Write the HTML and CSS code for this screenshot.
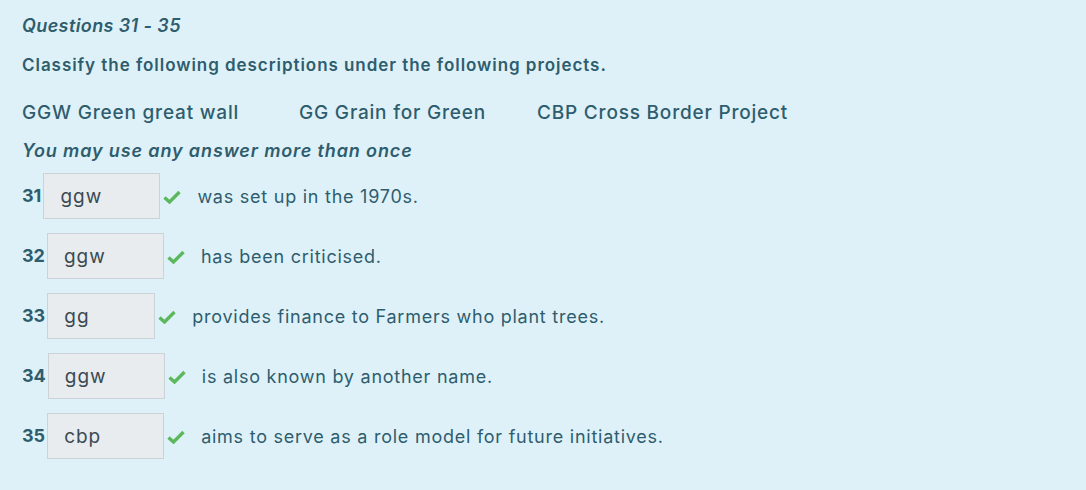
FILE: index.html
```html
<!DOCTYPE html>
<html lang="en">
<head>
<meta charset="utf-8">
<title>Questions 31 - 35</title>
<link rel="stylesheet" href="styles.css">
</head>
<body>
<main class="panel">
  <h2 class="q-title">Questions 31 - 35</h2>
  <p class="instr">Classify the following descriptions under the following projects.</p>
  <div class="projects">
    <span class="proj">GGW Green great wall</span>
    <span class="proj">GG Grain for Green</span>
    <span class="proj">CBP Cross Border Project</span>
  </div>
  <p class="note">You may use any answer more than once</p>
  <ol class="items">
    <li class="item"><span class="num">31</span><span class="box">ggw</span><svg class="tick" viewBox="0 0 18 14"><path d="M1.5 7.5 L6.5 12 L16.5 2" /></svg><span class="desc">was set up in the 1970s.</span></li>
    <li class="item"><span class="num">32</span><span class="box">ggw</span><svg class="tick" viewBox="0 0 18 14"><path d="M1.5 7.5 L6.5 12 L16.5 2" /></svg><span class="desc">has been criticised.</span></li>
    <li class="item"><span class="num">33</span><span class="box box-sm">gg</span><svg class="tick" viewBox="0 0 18 14"><path d="M1.5 7.5 L6.5 12 L16.5 2" /></svg><span class="desc">provides finance to Farmers who plant trees.</span></li>
    <li class="item"><span class="num">34</span><span class="box">ggw</span><svg class="tick" viewBox="0 0 18 14"><path d="M1.5 7.5 L6.5 12 L16.5 2" /></svg><span class="desc">is also known by another name.</span></li>
    <li class="item"><span class="num">35</span><span class="box">cbp</span><svg class="tick" viewBox="0 0 18 14"><path d="M1.5 7.5 L6.5 12 L16.5 2" /></svg><span class="desc">aims to serve as a role model for future initiatives.</span></li>
  </ol>
</main>
</body>
</html>
```
FILE: styles.css
```css
html, body {
  margin: 0;
  padding: 0;
  background: #dff1f8;
}
body {
  font-family: Inter, "Open Sans", "Liberation Sans", sans-serif;
  color: #2e5d6e;
}
.panel {
  padding: 13px 22px 20px 22px;
}
.q-title {
  margin: 0;
  font-size: 18px;
  font-style: italic;
  font-weight: 600;
  line-height: 26px;
  letter-spacing: 0.4px;
}
.instr {
  margin: 13px 0 0;
  font-size: 17px;
  font-weight: 600;
  line-height: 26px;
  letter-spacing: 0.95px;
}
.projects {
  display: flex;
  margin-top: 21px;
  font-size: 19px;
  font-weight: 500;
  line-height: 28px;
  letter-spacing: 0.8px;
}
.proj:nth-child(1) { width: 277px; }
.proj:nth-child(2) { width: 238px; }
.note {
  margin: 11px 0 0;
  font-size: 18px;
  font-style: italic;
  font-weight: 600;
  line-height: 26px;
  letter-spacing: 0.87px;
}
.items {
  list-style: none;
  margin: 9px 0 0;
  padding: 0;
}
.item {
  display: flex;
  align-items: center;
  height: 46px;
  margin-bottom: 14px;
}
.num {
  font-size: 18px;
  font-weight: 700;
  margin-right: 2px;
  margin-top: -2px;
}
.box {
  box-sizing: border-box;
  width: 117px;
  height: 46px;
  padding: 12px 0 0 16px;
  background: #e8ecef;
  border: 1px solid #cbd3d9;
  color: #3b4a52;
  font-size: 19px;
  line-height: 22px;
  letter-spacing: 1px;
}
.box-sm { width: 108px; }
.tick {
  width: 18px;
  height: 14px;
  margin: 2px 16px 0 3px;
  fill: none;
  stroke: #5cb85c;
  stroke-width: 3.4;
  stroke-linecap: butt;
  stroke-linejoin: miter;
}
.desc {
  font-size: 18px;
  color: #2e5d6e;
  letter-spacing: 0.75px;
}
```
